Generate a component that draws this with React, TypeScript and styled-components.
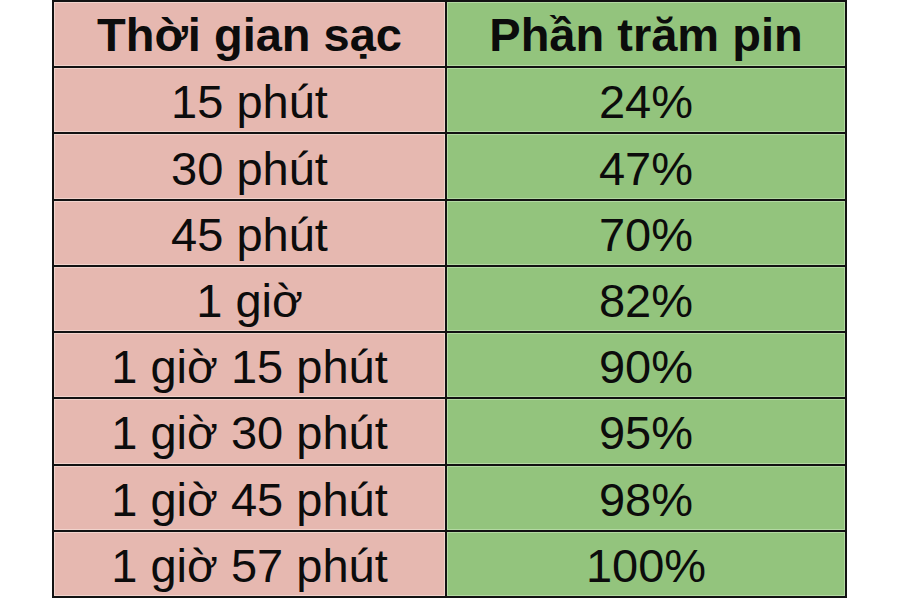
import React from "react";
import styled, { createGlobalStyle } from "styled-components";

const Global = createGlobalStyle`
  html, body { margin: 0; padding: 0; background: #ffffff; }
  body { font-family: "Liberation Sans", Arial, sans-serif; }
`;

const Page = styled.div`
  width: 900px;
  height: 599px;
  display: flex;
  justify-content: flex-start;
  align-items: flex-start;
  padding-left: 52px;
  box-sizing: border-box;
  background: #ffffff;
`;

const Table = styled.div`
  width: 795px;
  height: 598px;
  box-sizing: border-box;
  display: grid;
  grid-template-columns: 393px 1fr;
  grid-template-rows: repeat(9, 1fr);
  border-top: 2px solid #121212;
  border-left: 2px solid #121212;
`;

const Cell = styled.div<{ $tone: "pink" | "green"; $head?: boolean }>`
  display: flex;
  align-items: center;
  justify-content: center;
  box-sizing: border-box;
  border-right: 2px solid #121212;
  border-bottom: 2px solid #121212;
  background: ${(p) => (p.$tone === "pink" ? "#e6b8b0" : "#93c47d")};
  box-shadow: inset 0 0 0 1px
    ${(p) => (p.$tone === "pink" ? "#f1d3cc" : "#b3d9a2")};
  color: #0c0c0c;
  font-family: "Liberation Sans", Arial, sans-serif;
  font-size: 47px;
  font-weight: ${(p) => (p.$head ? 700 : 400)};
  line-height: 1;
  padding-top: ${(p) => (p.$head ? "0" : "3px")};
  white-space: nowrap;
`;

const rows: [string, string][] = [
  ["15 phút", "24%"],
  ["30 phút", "47%"],
  ["45 phút", "70%"],
  ["1 giờ", "82%"],
  ["1 giờ 15 phút", "90%"],
  ["1 giờ 30 phút", "95%"],
  ["1 giờ 45 phút", "98%"],
  ["1 giờ 57 phút", "100%"],
];

export default function App() {
  return (
    <>
      <Global />
      <Page>
        <Table>
          <Cell $tone="pink" $head>
            Thời gian sạc
          </Cell>
          <Cell $tone="green" $head>
            Phần trăm pin
          </Cell>
          {rows.map(([t, p]) => (
            <React.Fragment key={t}>
              <Cell $tone="pink">{t}</Cell>
              <Cell $tone="green">{p}</Cell>
            </React.Fragment>
          ))}
        </Table>
      </Page>
    </>
  );
}
